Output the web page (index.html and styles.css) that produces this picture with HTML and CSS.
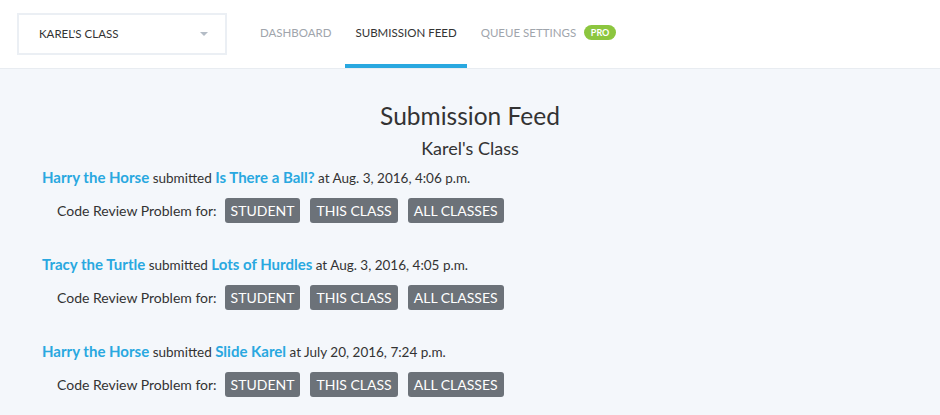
FILE: index.html
```html
<!DOCTYPE html>
<html lang="en">
<head>
    <meta charset="UTF-8">
    <meta name="viewport" content="width=device-width, initial-scale=1.0">
    <title>Submission Feed</title>
    <link rel="stylesheet" href="styles.css">
</head>
<body>
    <header class="topbar">
        <div class="class-select">
            <span>Karel's Class</span>
            <span class="caret"></span>
        </div>
        <nav class="tabs">
            <a href="#" class="tab">Dashboard</a>
            <a href="#" class="tab active">Submission Feed</a>
            <a href="#" class="tab">Queue Settings <span class="pro">Pro</span></a>
        </nav>
    </header>

    <main class="feed">
        <h1>Submission Feed</h1>
        <h2>Karel's Class</h2>

        <div class="item">
            <p class="line"><a href="#">Harry the Horse</a> submitted <a href="#">Is There a Ball?</a> at Aug. 3, 2016, 4:06 p.m.</p>
            <div class="review">
                <span>Code Review Problem for:</span>
                <button>Student</button>
                <button>This Class</button>
                <button>All Classes</button>
            </div>
        </div>

        <div class="item">
            <p class="line"><a href="#">Tracy the Turtle</a> submitted <a href="#">Lots of Hurdles</a> at Aug. 3, 2016, 4:05 p.m.</p>
            <div class="review">
                <span>Code Review Problem for:</span>
                <button>Student</button>
                <button>This Class</button>
                <button>All Classes</button>
            </div>
        </div>

        <div class="item">
            <p class="line"><a href="#">Harry the Horse</a> submitted <a href="#">Slide Karel</a> at July 20, 2016, 7:24 p.m.</p>
            <div class="review">
                <span>Code Review Problem for:</span>
                <button>Student</button>
                <button>This Class</button>
                <button>All Classes</button>
            </div>
        </div>
    </main>
</body>
</html>
```

FILE: styles.css
```css
body {
    margin: 0;
    font-family: Lato, "Open Sans", sans-serif;
    background-color: #f4f7fb;
    color: #333;
}
.topbar {
    display: flex;
    align-items: center;
    height: 68px;
    padding-left: 17px;
    background-color: #fff;
    border-bottom: 1px solid #e8ecf1;
}
.class-select {
    display: flex;
    align-items: center;
    justify-content: space-between;
    box-sizing: border-box;
    width: 210px;
    height: 42px;
    margin-top: -1px;
    padding: 0 17px 0 20px;
    border: 2px solid #ebeff4;
    font-size: 11.5px;
    text-transform: uppercase;
    color: #333;
}
.caret {
    width: 0;
    height: 0;
    border-left: 4px solid transparent;
    border-right: 4px solid transparent;
    border-top: 4px solid #b4bcc6;
}
.tabs {
    display: flex;
    align-self: stretch;
    margin-left: 21px;
}
.tab {
    display: flex;
    align-items: center;
    margin: 0 2px;
    padding: 0 10px;
    font-size: 11.5px;
    text-transform: uppercase;
    text-decoration: none;
    color: #a0a5ac;
    border-bottom: 4px solid transparent;
}
.tab.active {
    color: #333;
    border-bottom-color: #29a8e0;
}
.pro {
    display: inline-block;
    margin-left: 8px;
    width: 32px;
    height: 15px;
    line-height: 15px;
    text-align: center;
    border-radius: 8px;
    background-color: #8cc63f;
    color: #fff;
    font-size: 9px;
    font-weight: bold;
}
.feed {
    padding: 32px 42px 0;
}
h1 {
    margin: 0;
    line-height: 30px;
    text-align: center;
    font-size: 24.5px;
    font-weight: normal;
}
h2 {
    margin: 6px 0 0;
    line-height: 22px;
    text-align: center;
    font-size: 18px;
    font-weight: normal;
}
.item {
    margin-top: 8px;
    margin-bottom: 31px;
}
.line {
    margin: 0;
    line-height: 20px;
    font-size: 13.5px;
}
.line a {
    font-size: 15px;
    font-weight: bold;
    color: #29a8e0;
    text-decoration: none;
}
.review {
    display: flex;
    align-items: center;
    margin-top: 10px;
    padding-left: 15px;
    font-size: 14px;
}
.review span {
    margin-right: 8px;
}
button {
    height: 25px;
    margin-right: 10px;
    padding: 0 6px;
    font-family: inherit;
    font-size: 14px;
    text-transform: uppercase;
    color: #fff;
    background-color: #6c7279;
    border: none;
    border-radius: 3px;
}
```
